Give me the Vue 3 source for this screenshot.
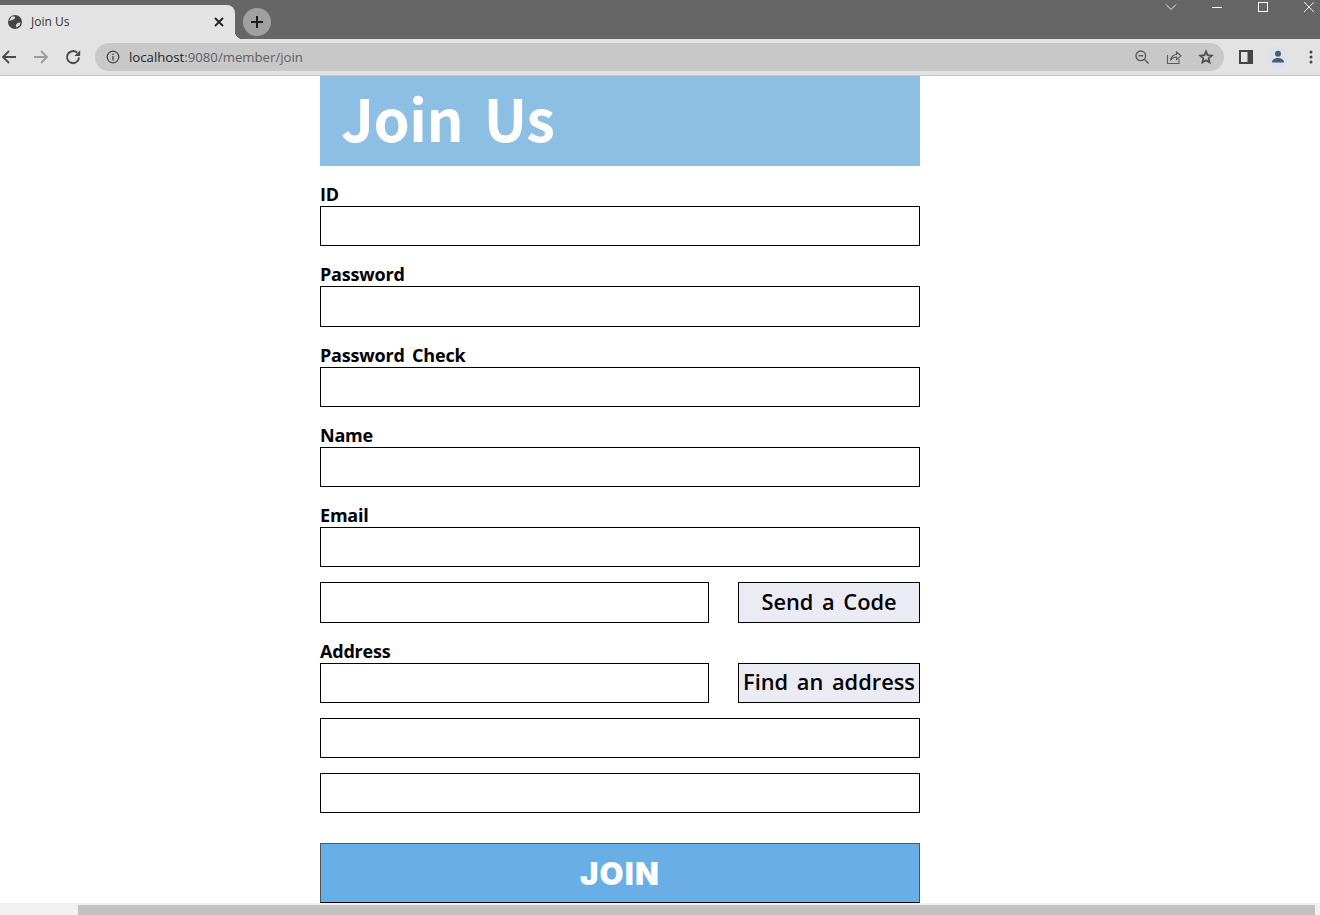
<template>
  <div class="window">
    <div class="tabstrip">
      <div class="tab">
        <svg class="favicon" width="16" height="16" viewBox="0 0 16 16">
          <circle cx="8" cy="8" r="7" fill="#454545" />
          <path d="M4.5 2.6 7.5 2.4 8.2 4 6 5.8 3.4 6.4 2 7ZM10.5 9 13.6 8.6 12.5 11.6 9.6 13.6 8.8 11.2Z" fill="#e3e3e3" />
        </svg>
        <span class="tab-title">Join Us</span>
        <svg class="tab-close" width="10" height="10" viewBox="0 0 10 10">
          <path d="M1 1 9 9M9 1 1 9" stroke="#222" stroke-width="1.8" fill="none" />
        </svg>
      </div>
      <div class="newtab">
        <svg width="14" height="14" viewBox="0 0 14 14">
          <path d="M7 1V13M1 7H13" stroke="#1c1c1c" stroke-width="2" fill="none" />
        </svg>
      </div>
      <div class="winctl">
        <svg width="12" height="12" viewBox="0 0 12 12">
          <path d="M1 3.5 6 8.5 11 3.5" stroke="#e8e8e8" fill="none" />
        </svg>
        <svg width="12" height="12" viewBox="0 0 12 12">
          <path d="M1 6.5H11" stroke="#fff" fill="none" />
        </svg>
        <svg width="12" height="12" viewBox="0 0 12 12">
          <rect x="1.5" y="1.5" width="9" height="9" stroke="#fff" fill="none" />
        </svg>
        <svg width="12" height="12" viewBox="0 0 12 12">
          <path d="M1 1 11 11M11 1 1 11" stroke="#fff" fill="none" />
        </svg>
      </div>
    </div>

    <div class="toolbar">
      <svg class="nav" width="16" height="16" viewBox="0 0 16 16">
        <path d="M15 8H2M8 2 2 8 8 14" stroke="#4a4a4a" stroke-width="1.8" fill="none" />
      </svg>
      <svg class="nav" width="16" height="16" viewBox="0 0 16 16">
        <path d="M1 8H14M8 2 14 8 8 14" stroke="#9c9c9c" stroke-width="1.8" fill="none" />
      </svg>
      <svg class="nav" width="16" height="16" viewBox="0 0 16 16">
        <path d="M14 8.5A6 6 0 1 1 12.2 3.8" stroke="#4a4a4a" stroke-width="2" fill="none" />
        <path d="M9.4 7H15.2V1.2Z" fill="#4a4a4a" />
      </svg>
      <div class="omnibox">
        <svg width="14" height="14" viewBox="0 0 14 14">
          <circle cx="7" cy="7" r="5.8" stroke="#4a4a4a" stroke-width="1.3" fill="none" />
          <path d="M7 6V10.4M7 3.6V5" stroke="#4a4a4a" stroke-width="1.4" fill="none" />
        </svg>
        <span class="url">localhost<span class="url-path">:9080/member/join</span></span>
        <div class="omni-icons">
          <svg width="16" height="16" viewBox="0 0 16 16">
            <circle cx="6.8" cy="6.8" r="4.8" stroke="#5a5a5a" stroke-width="1.4" fill="none" />
            <path d="M4.5 6.8H9.1M10.3 10.3 14.6 14.6" stroke="#5a5a5a" stroke-width="1.4" fill="none" />
          </svg>
          <svg width="16" height="16" viewBox="0 0 16 16">
            <path d="M1.5 6V14.5H13V10M4.5 11.5C5 7.5 8 5.5 10.5 5.5V3L15 6.8 10.5 10.5V8C8 8 6 9 4.5 11.5Z" stroke="#5a5a5a" stroke-width="1.1" fill="none" />
          </svg>
          <svg width="16" height="16" viewBox="0 0 16 16">
            <path d="M8 2.4 9.6 6.2 13.8 6.6 10.6 9.3 11.6 13.4 8 11.2 4.4 13.4 5.4 9.3 2.2 6.6 6.4 6.2Z" stroke="#4f4f4f" stroke-width="1.7" fill="none" />
          </svg>
        </div>
      </div>
      <svg class="panel" width="14" height="14" viewBox="0 0 14 14">
        <path d="M0 0H14V14H0ZM2 2V12H8.5V2Z" fill="#444" fill-rule="evenodd" />
      </svg>
      <div class="avatar">
        <svg width="14" height="14" viewBox="0 0 14 14">
          <circle cx="7" cy="3.8" r="3" fill="#4a5a78" />
          <path d="M1 12.5C1 9.5 4 8 7 8S13 9.5 13 12.5Z" fill="#4a5a78" />
        </svg>
      </div>
      <svg class="dots" width="4" height="14" viewBox="0 0 4 14">
        <circle cx="2" cy="2" r="1.5" fill="#444" />
        <circle cx="2" cy="7" r="1.5" fill="#444" />
        <circle cx="2" cy="12" r="1.5" fill="#444" />
      </svg>
    </div>

    <div class="page">
      <div class="join">
        <h1 class="title">Join Us</h1>
        <form class="form" @submit.prevent>
          <label class="label">ID</label>
          <input class="box field" type="text" />
          <label class="label">Password</label>
          <input class="box field" type="password" />
          <label class="label">Password Check</label>
          <input class="box field" type="password" />
          <label class="label">Name</label>
          <input class="box field" type="text" />
          <label class="label">Email</label>
          <input class="box near" type="text" />
          <div class="row field">
            <input class="box" type="text" />
            <button class="side" type="button">Send a Code</button>
          </div>
          <label class="label">Address</label>
          <div class="row near">
            <input class="box" type="text" />
            <button class="side" type="button">Find an address</button>
          </div>
          <input class="box near" type="text" />
          <input class="box last" type="text" />
          <button class="submit" type="submit">JOIN</button>
        </form>
      </div>
    </div>

    <div class="hscroll"><div class="thumb"></div></div>
  </div>
</template>

<script setup>
</script>

<style>
html,
body {
  margin: 0;
  overflow: hidden;
}
</style>

<style scoped>
.window {
  display: flex;
  flex-direction: column;
  height: 915px;
  background: #fff;
  font-family: "Open Sans", "Noto Sans", sans-serif;
  overflow: hidden;
}

.tabstrip {
  display: flex;
  align-items: flex-end;
  height: 39px;
  background: #666;
  flex: none;
}

.tab {
  position: relative;
  display: flex;
  align-items: center;
  width: 235px;
  height: 34px;
  box-sizing: border-box;
  padding: 0 11px 0 7px;
  background: #e3e3e3;
  border-top-right-radius: 8px;
}

.tab::after {
  content: "";
  position: absolute;
  right: -8px;
  bottom: 0;
  width: 8px;
  height: 8px;
  background: radial-gradient(circle at 100% 0, transparent 8px, #e3e3e3 8.5px);
}

.favicon {
  flex: none;
}

.tab-title {
  flex: 1;
  margin: 0 0 2px 8px;
  font-size: 12px;
  color: #333;
}

.newtab {
  display: flex;
  align-items: center;
  justify-content: center;
  width: 28px;
  height: 28px;
  margin: 0 0 3px 8px;
  border-radius: 50%;
  background: #a0a0a0;
}

.winctl {
  display: flex;
  gap: 34px;
  margin-left: auto;
  align-self: flex-start;
  padding: 1px 5px 0 0;
}

.toolbar {
  display: flex;
  align-items: center;
  height: 36px;
  flex: none;
  background: #e3e3e3;
  border-bottom: 1px solid #c6c6c6;
}

.nav {
  flex: none;
  margin-left: 16px;
}

.nav:first-child {
  margin-left: 1px;
}

.omnibox {
  display: flex;
  align-items: center;
  flex: none;
  width: 1129px;
  height: 28px;
  box-sizing: border-box;
  margin-left: 14px;
  padding: 0 10px 0 11px;
  border-radius: 14px;
  background: #c8c8c8;
}

.url {
  margin-left: 9px;
  font-size: 13.2px;
  color: #1f1f1f;
}

.url-path {
  color: #5f5f5f;
}

.omni-icons {
  display: flex;
  gap: 16px;
  margin-left: auto;
}

.panel {
  flex: none;
  margin-left: 15px;
}

.avatar {
  display: flex;
  align-items: center;
  justify-content: center;
  flex: none;
  width: 22px;
  height: 22px;
  margin-left: 14px;
  border-radius: 50%;
  background: #dde1e8;
}

.dots {
  flex: none;
  margin-left: 20px;
}

.page {
  flex: 1;
  min-height: 0;
}

.join {
  width: 600px;
  margin-left: 320px;
}

.title {
  height: 89.67px;
  margin: 0;
  padding-left: 21px;
  background: #8dbfe4;
  color: #fff;
  font-family: "Noto Sans CJK KR", "Open Sans", sans-serif;
  font-size: 58px;
  font-weight: 700;
  line-height: 82px;
  letter-spacing: -0.5px;
  word-spacing: 8px;
}

.form {
  display: flex;
  flex-direction: column;
  margin-top: 20.28px;
}

.label {
  display: block;
  height: 20px;
  font-size: 18px;
  font-weight: 700;
  line-height: 16px;
  letter-spacing: -0.2px;
  word-spacing: 3px;
  color: #000;
}

.box {
  display: block;
  width: 100%;
  height: 40.3px;
  box-sizing: border-box;
  margin: 0;
  padding: 0;
  border: 1px solid #000;
  background: #fff;
  outline: none;
}

.field {
  margin-bottom: 20px;
}

.near {
  margin-bottom: 14.9px;
}

.last {
  margin-bottom: 30px;
}

.row {
  display: flex;
  justify-content: space-between;
  height: 40.3px;
}

.row .box {
  width: 389px;
  margin: 0;
}

.side {
  width: 182px;
  height: 40.3px;
  box-sizing: border-box;
  padding: 0 0 2px;
  border: 1px solid #000;
  background: #ebebf5;
  color: #000;
  font-family: inherit;
  font-size: 21.8px;
  font-weight: 600;
  word-spacing: 3px;
  white-space: nowrap;
}

.submit {
  height: 60px;
  padding: 0;
  border: 1px solid;
  border-color: #555 #555 #000 #555;
  background: #6aaee6;
  color: #fff;
  font-family: "Inter", sans-serif;
  font-size: 31px;
  font-weight: 900;
  letter-spacing: 1.2px;
}

.hscroll {
  position: absolute;
  top: 903px;
  left: 0;
  width: 1320px;
  height: 12px;
  background: #f1f1f1;
}

.thumb {
  position: absolute;
  left: 78px;
  top: 2px;
  width: 1237px;
  height: 10px;
  background: #c1c1c1;
}
</style>
